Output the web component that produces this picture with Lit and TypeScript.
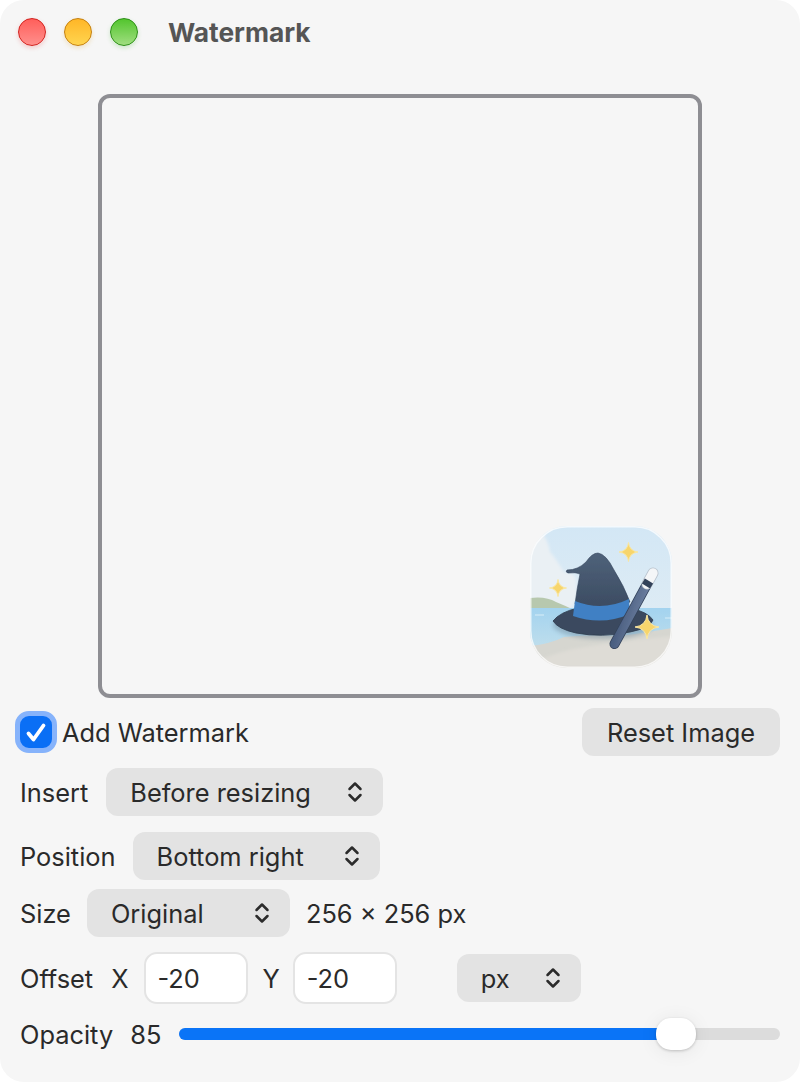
import { LitElement, html, css, svg } from "lit";
import { customElement } from "lit/decorators.js";

const chevrons = html`<svg class="chev" width="16" height="22" viewBox="0 0 16 22" fill="none" stroke="#2b2b2b" stroke-width="2.5" stroke-linecap="round" stroke-linejoin="round"><path d="M2.5 8 L8 2.5 L13.5 8"/><path d="M2.5 14 L8 19.5 L13.5 14"/></svg>`;

const sparkle = (cx: number, cy: number, r: number) => {
  const k = r * 0.1;
  return svg`<path d="M${cx} ${cy - r} Q${cx + k} ${cy - k} ${cx + r} ${cy} Q${cx + k} ${cy + k} ${cx} ${cy + r} Q${cx - k} ${cy + k} ${cx - r} ${cy} Q${cx - k} ${cy - k} ${cx} ${cy - r}Z" fill="#f7d56c" stroke="#f9e7a4" stroke-width="1"/>`;
};

const wizardIcon = html`<svg class="wm" width="142" height="142" viewBox="0 0 142 142">
  <defs>
    <linearGradient id="sky" x1="0" y1="0" x2="0" y2="1"><stop offset="0" stop-color="#d3e7f5"/><stop offset="1" stop-color="#e4eef4"/></linearGradient>
    <linearGradient id="sea" x1="0" y1="0" x2="0" y2="1"><stop offset="0" stop-color="#a3d3ef"/><stop offset="1" stop-color="#bfdeec"/></linearGradient>
    <linearGradient id="hat" x1="0" y1="0" x2="0" y2="1"><stop offset="0" stop-color="#4f627a"/><stop offset="1" stop-color="#3b4b61"/></linearGradient>
    <linearGradient id="wand" x1="0" y1="0" x2="1" y2="0.5"><stop offset="0" stop-color="#384c6e"/><stop offset="1" stop-color="#6f82a3"/></linearGradient>
    <clipPath id="sq"><rect x="0" y="0" width="142" height="142" rx="37"/></clipPath>
    <filter id="all" x="-5%" y="-5%" width="110%" height="110%"><feGaussianBlur stdDeviation=".35"/></filter>
    <filter id="soft" x="-20%" y="-20%" width="140%" height="140%"><feGaussianBlur stdDeviation="1.5"/></filter>
    <filter id="shade" x="-20%" y="-40%" width="140%" height="180%"><feGaussianBlur stdDeviation="2"/></filter>
  </defs>
  <g clip-path="url(#sq)"><g filter="url(#all)">
    <rect width="142" height="142" fill="url(#sky)"/>
    <path d="M0 0 V84 H38 Q50 74 46 60 Q48 46 34 46 Q24 30 20 26 Q18 12 10 6 L0 0Z" fill="#eaf0f4" filter="url(#soft)"/>
    <path d="M0 72 Q16 70 26 76 Q36 80 44 84 H0Z" fill="#b7c8ae"/>
    <rect y="82" width="142" height="40" fill="url(#sea)"/>
    <path d="M5 89h9M135 92h7" stroke="#d8edf8" stroke-width="1.2"/>
    <path d="M0 120 Q20 118 34 111 Q60 108 90 110 Q120 106 142 102 V142 H0Z" fill="#d6d6d0"/>
    <path d="M0 138 Q30 124 60 120 Q100 114 142 110 V142 H0Z" fill="#dedcd6" filter="url(#soft)"/>
    <ellipse cx="73" cy="99" rx="50" ry="14" fill="#6f8799" opacity=".45" filter="url(#shade)"/>
    <path d="M23 95 Q30 86 48 82 H100 Q118 86 123 94 Q120 102 100 106 Q72 112 46 107 Q28 103 23 95Z" fill="#3b4a5f" stroke="#2d3a4d" stroke-width=".8"/>
    <path d="M37 44 Q48 44 56 36 Q62 27 68 27 Q76 28 84 44 Q94 60 100 76 Q72 88 45 78 Q47 62 50 48 Q46 46 38 47 Q35 46 37 44Z" fill="url(#hat)" stroke="#34435a" stroke-width=".6"/>
    <path d="M45 75 Q72 86 99 73 L100 88 Q72 100 43 90Z" fill="#3f80c4"/>
    <path d="M84.5 118 L116 60" stroke="#33425a" stroke-width="10" stroke-linecap="round"/>
    <path d="M84.5 118 L116 60" stroke="url(#wand)" stroke-width="8.6" stroke-linecap="round"/>
    <path d="M117 58 L123 47" stroke="#b9c3ce" stroke-width="11" stroke-linecap="round"/>
    <path d="M117 58 L123 47" stroke="#f4f6f8" stroke-width="9.4" stroke-linecap="round"/>
    <path d="M116 60 L119 55" stroke="#33425a" stroke-width="9.6"/>
    ${sparkle(98.5, 26, 9.5)}
    ${sparkle(28, 62, 8.5)}
    ${sparkle(117, 101, 12)}
  </g></g>
  <rect x=".75" y=".75" width="140.5" height="140.5" rx="36.5" fill="none" stroke="#ffffff" stroke-opacity=".75" stroke-width="1.5"/>
</svg>`;

@customElement("app-root")
export class AppRoot extends LitElement {
  static styles = css`
    :host { display: block; width: 800px; height: 1082px; background: #fff; font-family: Inter, "Liberation Sans", sans-serif; font-size: 25.4px; color: #2a2a2a; }
    .win { box-sizing: border-box; height: 1082px; background: #f6f6f6; border-radius: 24px; display: flex; flex-direction: column; padding: 0 20px; }
    .title { height: 64px; flex: none; display: flex; align-items: center; gap: 18px; margin-left: -2px; }
    .dot { width: 28px; height: 28px; border-radius: 50%; box-sizing: border-box; }
    .red { background: linear-gradient(#ff5f5b, #ff8f8c); border: 1.5px solid #d3211d; box-shadow: 0 2px 4px rgba(230,60,60,.22); }
    .yel { background: linear-gradient(#ffb627, #ffd550); border: 1.5px solid #c57f0c; box-shadow: 0 2px 4px rgba(220,160,30,.22); }
    .grn { background: linear-gradient(#53c52e, #a0de80); border: 1.5px solid #2a8f14; box-shadow: 0 2px 4px rgba(70,180,50,.22); }
    .name { font-weight: 700; font-size: 26.3px; color: #555; margin-left: 12px; }
    .preview { box-sizing: border-box; flex: none; align-self: center; margin-top: 30px; width: 604px; height: 604px; border: 4px solid #8e8e93; border-radius: 12px; display: flex; justify-content: flex-end; align-items: flex-end; padding: 0 26px 26px 0; }
    .wm { display: block; }
    .row { display: flex; align-items: center; flex: none; }
    .r1 { margin-top: 10px; height: 48px; justify-content: space-between; }
    .check { display: flex; align-items: center; gap: 5px; margin-left: -5px; }
    .box { box-sizing: content-box; width: 32px; height: 32px; border: 5px solid #86b3fb; border-radius: 14px; background: #0a6ff5; display: flex; align-items: center; justify-content: center; }
    .btn { height: 48px; width: 198px; background: #e3e3e3; border-radius: 12px; display: flex; align-items: center; justify-content: center; }
    .sel { height: 48px; box-sizing: border-box; background: #e3e3e3; border-radius: 12px; display: flex; align-items: center; justify-content: space-between; padding: 0 20px 0 24px; }
    .r2 { margin-top: 12px; height: 48px; gap: 18px; }
    .r2 .sel { width: 277px; }
    .r3 { margin-top: 16px; height: 48px; gap: 17px; }
    .r3 .sel { width: 247px; }
    .r4 { margin-top: 9px; height: 48px; gap: 16px; }
    .r4 .sel { width: 203px; }
    .r5 { margin-top: 15px; height: 52px; }
    .off { margin-right: 18px; }
    .inp { box-sizing: border-box; width: 104px; height: 52px; background: #fff; border: 2px solid #e4e4e4; border-radius: 13px; display: flex; align-items: center; padding-left: 12px; }
    .lx { margin-right: 15px; }
    .ly { margin: 0 13px 0 15px; }
    .px { width: 124px; margin-left: 60px; }
    .r6 { margin-top: 6px; height: 48px; gap: 17px; }
    .slider { flex: 1; height: 12px; margin-left: 1px; border-radius: 6px; background: #dcdcdc; position: relative; }
    .fill { height: 100%; border-radius: 6px 0 0 6px; background: #0a74f7; }
    .thumb { position: absolute; top: -10px; width: 40px; height: 32px; border-radius: 15px; background: #fff; box-shadow: 0 1px 3px rgba(0,0,0,.2), 0 2px 20px rgba(0,0,0,.07); transform: translateX(-50%); }
  `;

  render() {
    return html`<div class="win">
      <div class="title">
        <div class="dot red"></div><div class="dot yel"></div><div class="dot grn"></div>
        <div class="name">Watermark</div>
      </div>
      <div class="preview">${wizardIcon}</div>
      <div class="row r1">
        <div class="check">
          <div class="box"><svg width="24" height="24" viewBox="0 0 24 24" fill="none" stroke="#fff" stroke-width="3.8" stroke-linecap="round" stroke-linejoin="round"><path d="M4.5 13.5 L9.5 19.5 L19.5 5.5"/></svg></div>
          <span>Add Watermark</span>
        </div>
        <div class="btn"><span>Reset Image</span></div>
      </div>
      <div class="row r2"><span>Insert</span><div class="sel"><span>Before resizing</span>${chevrons}</div></div>
      <div class="row r3"><span>Position</span><div class="sel"><span>Bottom right</span>${chevrons}</div></div>
      <div class="row r4"><span>Size</span><div class="sel"><span>Original</span>${chevrons}</div><span>256 × 256 px</span></div>
      <div class="row r5">
        <span class="off">Offset</span><span class="lx">X</span><div class="inp"><span>-20</span></div>
        <span class="ly">Y</span><div class="inp"><span>-20</span></div>
        <div class="sel px"><span>px</span>${chevrons}</div>
      </div>
      <div class="row r6"><span>Opacity</span><span>85</span>
        <div class="slider"><div class="fill" style="width:${(497 / 601) * 100}%"></div><div class="thumb" style="left:${(497 / 601) * 100}%"></div></div>
      </div>
    </div>`;
  }
}
